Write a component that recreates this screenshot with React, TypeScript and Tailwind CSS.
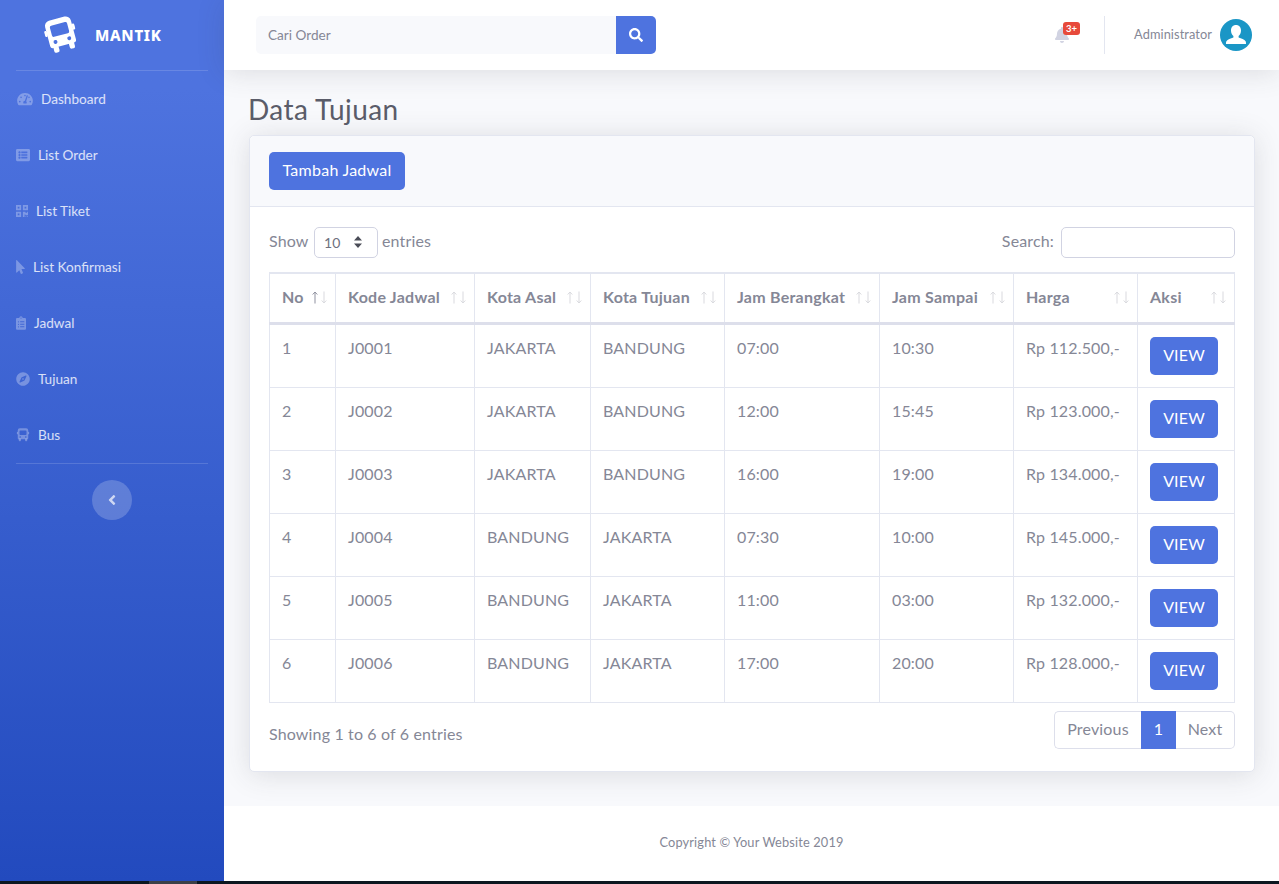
import React from 'react';
import { FaAngleLeft, FaBell, FaClipboardList, FaCompass, FaListAlt, FaMousePointer, FaQrcode, FaSearch, FaTachometerAlt } from 'react-icons/fa';

const BusIcon = ({ className }: { className?: string }) => (
  <svg viewBox="0 0 36 40" className={className} fill="currentColor">
    <path
      fillRule="evenodd"
      d="M9 1h18a6 6 0 0 1 6 6v22a3 3 0 0 1-3 3H6a3 3 0 0 1-3-3V7a6 6 0 0 1 6-6zM10 7a2 2 0 0 0-2 2v9a2 2 0 0 0 2 2h16a2 2 0 0 0 2-2V9a2 2 0 0 0-2-2zM10 23.8a2.2 2.2 0 1 0 0 4.4 2.2 2.2 0 0 0 0-4.4zM26 23.8a2.2 2.2 0 1 0 0 4.4 2.2 2.2 0 0 0 0-4.4z"
    />
    <rect x="6" y="30" width="6" height="8" rx="2" />
    <rect x="24" y="30" width="6" height="8" rx="2" />
    <rect x="0.5" y="11" width="3" height="7" rx="1.5" />
    <rect x="32.5" y="11" width="3" height="7" rx="1.5" />
  </svg>
);

const menu = [
  { label: 'Dashboard', icon: FaTachometerAlt, size: 'w-4 ml-px' },
  { label: 'List Order', icon: FaListAlt, size: 'w-[14px]' },
  { label: 'List Tiket', icon: FaQrcode, size: 'w-[12px]' },
  { label: 'List Konfirmasi', icon: FaMousePointer, size: 'w-[9px]' },
  { label: 'Jadwal', icon: FaClipboardList, size: 'w-[10px]' },
  { label: 'Tujuan', icon: FaCompass, size: 'w-[14px]' },
  { label: 'Bus', icon: BusIcon, size: 'w-[14px]' },
];

const columns = [
  { label: 'No', width: 66 },
  { label: 'Kode Jadwal', width: 139 },
  { label: 'Kota Asal', width: 116 },
  { label: 'Kota Tujuan', width: 134 },
  { label: 'Jam Berangkat', width: 155 },
  { label: 'Jam Sampai', width: 134 },
  { label: 'Harga', width: 124 },
  { label: 'Aksi', width: 97 },
];

const rows = [
  ['1', 'J0001', 'JAKARTA', 'BANDUNG', '07:00', '10:30', 'Rp 112.500,-'],
  ['2', 'J0002', 'JAKARTA', 'BANDUNG', '12:00', '15:45', 'Rp 123.000,-'],
  ['3', 'J0003', 'JAKARTA', 'BANDUNG', '16:00', '19:00', 'Rp 134.000,-'],
  ['4', 'J0004', 'BANDUNG', 'JAKARTA', '07:30', '10:00', 'Rp 145.000,-'],
  ['5', 'J0005', 'BANDUNG', 'JAKARTA', '11:00', '03:00', 'Rp 132.000,-'],
  ['6', 'J0006', 'BANDUNG', 'JAKARTA', '17:00', '20:00', 'Rp 128.000,-'],
];

const Sidebar = () => (
  <aside className="w-[224px] shrink-0 flex flex-col bg-gradient-to-b from-[#4e73df] from-10% to-[#224abe] tracking-normal">
    <div className="h-[70px] flex items-center pl-[45px] gap-[16px]">
      <BusIcon className="w-[32px] h-[36px] text-white -rotate-[15deg]" />
      <span className="ml-[2px] font-['Noto_Sans',sans-serif] text-[15px] font-extrabold tracking-[0.7px] text-white">MANTIK</span>
    </div>
    <div className="mx-4 h-px bg-white/15" />
    {menu.map(({ label, icon: Icon, size }) => (
      <div key={label} className="h-[56px] px-4 flex items-center gap-2 text-[13.6px] text-white/80">
        <Icon className={`h-[14px] text-white/30 ${size}`} />
        <span>{label}</span>
      </div>
    ))}
    <div className="mx-4 h-px bg-white/15" />
    <div className="mt-4 mx-auto w-10 h-10 rounded-full bg-white/20 flex items-center justify-center">
      <FaAngleLeft className="w-2 h-4 text-white/70" />
    </div>
  </aside>
);

const Topbar = () => (
  <header className="relative z-10 h-[70px] shrink-0 bg-white shadow-[0_2.4px_28px_0_rgba(58,59,69,0.15)] flex items-center pl-[32px] pr-[27px]">
    <div className="flex w-[400px] h-[38px]">
      <div className="flex-1 bg-[#f8f9fc] rounded-l-[5px] pl-3 flex items-center text-[13.6px] tracking-normal text-[#858796]">Cari Order</div>
      <div className="w-10 bg-[#4e73df] rounded-r-[5px] flex items-center justify-center">
        <FaSearch className="w-[14px] h-[14px] text-white" />
      </div>
    </div>
    <div className="ml-auto relative mr-[35px]">
      <FaBell className="w-[14px] h-4 text-[#d1d3e2]" />
      <span className="absolute -top-[5px] left-[8px] w-[17px] h-[13px] rounded-[3px] bg-[#e74a3b] text-white text-[9.5px] font-bold leading-[13px] text-center tracking-normal">3+</span>
    </div>
    <div className="w-px h-[38px] bg-[#e3e6f0]" />
    <span className="ml-[29px] text-[12.8px] tracking-[0.08px] text-[#858796]">Administrator</span>
    <svg viewBox="0 0 32 32" className="ml-2 w-8 h-8">
      <circle cx="16" cy="16" r="16" fill="#1a96c6" />
      <path d="M16 6c-3 0-5 2.2-5 5.4 0 2.3 1 4.4 2.4 5.6v1.6c-2.6 1-5.9 1.7-7 3.6-.5 1-.4 2.3-.4 2.8h20c0-.5.1-1.8-.4-2.8-1.1-1.9-4.4-2.6-7-3.6V17c1.4-1.2 2.4-3.3 2.4-5.6C21 8.2 19 6 16 6z" fill="#fff" />
    </svg>
  </header>
);

const SortArrows = ({ active }: { active: boolean }) => (
  <span className="absolute right-[8px] top-[17px] flex gap-[3px] text-[#858796]">
    <svg viewBox="0 0 6 13" className={`w-[6px] h-[13px] ${active ? 'opacity-90' : 'opacity-30'}`} fill="none" stroke="currentColor">
      <path d="M3 12.5V1M.7 3.5 3 1l2.3 2.5" />
    </svg>
    <svg viewBox="0 0 6 13" className="w-[6px] h-[13px] opacity-30" fill="none" stroke="currentColor">
      <path d="M3 .5V12M.7 9.5 3 12l2.3-2.5" />
    </svg>
  </span>
);

const DataTable = () => (
  <table className="w-[965px] table-fixed border-collapse">
    <colgroup>
      {columns.map((c) => (
        <col key={c.label} style={{ width: c.width }} />
      ))}
    </colgroup>
    <thead>
      <tr className="border-t-2 border-[#e3e6f0]">
        {columns.map((c, i) => (
          <th key={c.label} className="relative h-[51px] px-3 pb-[2px] text-left text-[16px] font-bold tracking-[0.25px] text-[#858796] border-x border-b-[3px] border-x-[#e3e6f0] border-b-[#dddfeb]">
            {c.label}
            <SortArrows active={i === 0} />
          </th>
        ))}
      </tr>
    </thead>
    <tbody>
      {rows.map((row) => (
        <tr key={row[0]}>
          {row.map((cell, i) => (
            <td key={i} className="h-[63px] px-3 pt-[11px] pb-3 align-top text-[#858796] border border-[#e3e6f0]">{cell}</td>
          ))}
          <td className="p-3 align-top border border-[#e3e6f0]">
            <div className="w-[68px] h-[38px] pb-[2px] rounded-[5px] bg-[#4e73df] text-white flex items-center justify-center">VIEW</div>
          </td>
        </tr>
      ))}
    </tbody>
  </table>
);

const Card = () => (
  <section className="bg-white border border-[#e3e6f0] rounded-[5px] shadow-[0_2.4px_28px_0_rgba(58,59,69,0.15)] h-[637px]">
    <div className="h-[71px] bg-[#f8f9fc] border-b border-[#e3e6f0] rounded-t-[5px] px-[19px] pt-4">
      <div className="w-[136px] h-[38px] pb-[2px] rounded-[5px] bg-[#4e73df] text-white tracking-[0.25px] flex items-center justify-center">Tambah Jadwal</div>
    </div>
    <div className="px-[19px] pt-5">
      <div className="h-[31px] flex items-center justify-between text-[#858796]">
        <div className="flex items-center gap-1">
          <span className="w-[41px] pb-[3px]">Show</span>
          <div className="w-16 h-[31px] border border-[#d1d3e2] rounded-[5px] flex items-center justify-between pl-[9px] pr-[15px] text-[14px] text-[#6e707e]">
            10
            <svg viewBox="0 0 8 12" className="w-2 h-3" fill="#4a4c57">
              <path d="M4 0 8 4.5H0zM4 12 0 7.5h8z" />
            </svg>
          </div>
          <span className="pb-[3px]">entries</span>
        </div>
        <div className="flex items-center gap-[7px]">
          <span className="pb-[2px]">Search:</span>
          <div className="w-[174px] h-[31px] border border-[#d1d3e2] rounded-[5px]" />
        </div>
      </div>
      <div className="mt-[14px]">
        <DataTable />
      </div>
      <div className="mt-2 flex justify-between text-[#858796]">
        <span className="pt-[11px]">Showing 1 to 6 of 6 entries</span>
        <div className="flex h-[38px]">
          <div className="w-[87px] pb-[2px] border border-r-0 border-[#dddfeb] rounded-l-[5px] flex items-center justify-center">Previous</div>
          <div className="w-[35px] pb-[2px] bg-[#4e73df] text-white flex items-center justify-center">1</div>
          <div className="w-[59px] pb-[2px] border border-l-0 border-[#dddfeb] rounded-r-[5px] flex items-center justify-center">Next</div>
        </div>
      </div>
    </div>
  </section>
);

export default function App() {
  return (
    <div className="h-[884px] overflow-hidden flex flex-col font-['Lato',sans-serif] text-base tracking-[0.15px]">
      <div className="h-[881px] flex">
        <Sidebar />
        <div className="flex-1 flex flex-col min-w-0 bg-[#f8f9fc]">
          <Topbar />
          <main className="flex-1 pt-[23px] pl-[25px] pr-6 overflow-hidden">
            <h1 className="-ml-px text-[28px] leading-[33.6px] mb-[8px] tracking-[0.42px] text-[#5a5c69]">Data Tujuan</h1>
            <Card />
          </main>
          <footer className="h-[75px] pb-[2px] shrink-0 bg-white flex items-center justify-center text-[12.8px] text-[#858796]">
            Copyright © Your Website 2019
          </footer>
        </div>
      </div>
      <div className="h-[3px] bg-[#0c1720] pl-[149px]">
        <div className="w-12 h-[3px] bg-[#3c4048]" />
      </div>
    </div>
  );
}
